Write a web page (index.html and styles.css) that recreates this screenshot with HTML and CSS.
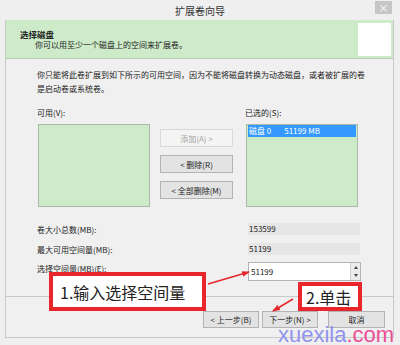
FILE: index.html
```html
<!DOCTYPE html>
<html lang="zh-CN">
<head>
  <meta charset="UTF-8" />
  <title>扩展卷向导</title>
  <link rel="stylesheet" href="styles.css">
</head>
<body>
  <div class="frame">
    <div class="titlebar">
      <span></span>
      <span class="title">扩展卷向导</span>
      <span class="close">×</span>
    </div>

    <div class="client">
      <div class="header">
        <div class="header-text">
          <div class="header-title">选择磁盘</div>
          <div class="header-sub">你可以用至少一个磁盘上的空间来扩展卷。</div>
        </div>
        <div class="header-icon"></div>
      </div>

      <div class="content">
        <p class="intro">你只能将此卷扩展到如下所示的可用空间，因为不能将磁盘转换为动态磁盘，或者被扩展的卷<br>是启动卷或系统卷。</p>

        <div class="pick">
          <div class="col">
            <div class="lbl">可用(V):</div>
            <div class="listbox"></div>
          </div>
          <div class="mid">
            <button class="btn" disabled>添加(A) &gt;</button>
            <button class="btn">&lt; 删除(R)</button>
            <button class="btn">&lt; 全部删除(M)</button>
          </div>
          <div class="col">
            <div class="lbl">已选的(S):</div>
            <div class="listbox">
              <div class="item selected"><span>磁盘 0</span><span>51199 MB</span></div>
            </div>
          </div>
        </div>

        <div class="fields">
          <div class="row">
            <span class="row-lbl">卷大小总数(MB):</span>
            <span class="ro">153599</span>
          </div>
          <div class="row">
            <span class="row-lbl">最大可用空间量(MB):</span>
            <span class="ro">51199</span>
          </div>
          <div class="row row-top">
            <span class="row-lbl">选择空间量(MB)(E):</span>
            <div class="spin">
              <input type="text" value="51199">
              <div class="spin-btns">
                <span class="up"></span>
                <span class="down"></span>
              </div>
            </div>
          </div>
        </div>
      </div>

      <div class="footer">
        <button class="btn">&lt; 上一步(B)</button>
        <button class="btn">下一步(N) &gt;</button>
        <button class="btn cancel">取消</button>
      </div>
    </div>

    <!-- annotations drawn over the screenshot -->
    <div class="note note1">1.输入选择空间量</div>
    <div class="note note2">2.单击</div>
    <svg class="arrows" width="400" height="345" viewBox="0 0 400 345">
      <defs>
        <marker id="head" markerWidth="8" markerHeight="6" refX="7" refY="3" orient="auto" markerUnits="userSpaceOnUse">
          <path d="M0 0 L8 3 L0 6 Z" fill="#e8262b"/>
        </marker>
      </defs>
      <line x1="208" y1="284" x2="249" y2="272" stroke="#e8262b" stroke-width="1.5" marker-end="url(#head)"/>
      <line x1="293" y1="299" x2="273" y2="311" stroke="#e8262b" stroke-width="1.5" marker-end="url(#head)"/>
    </svg>
    <div class="watermark"><span class="wm-a">xuexila</span><span class="wm-b">.com</span></div>
  </div>
</body>
</html>
```

FILE: styles.css
```css
* {
  box-sizing: border-box;
}

body {
  margin: 0;
  background: #efefef;
  font-family: "Noto Sans CJK SC", "Liberation Sans", sans-serif;
  color: #222;
}

.frame {
  position: relative;
  width: 400px;
  height: 345px;
  background: #efefef;
  overflow: hidden;
}

.titlebar {
  height: 20px;
  display: grid;
  grid-template-columns: 1fr auto 1fr;
  align-items: center;
}

.title {
  font-size: 10px;
  color: #333;
}

.close {
  justify-self: end;
  margin-right: 8px;
  width: 17px;
  height: 13px;
  background: #c6c6c6;
  color: #fff;
  font-size: 10px;
  line-height: 13px;
  text-align: center;
  align-self: start;
  margin-top: 1px;
}

.client {
  margin: 0 6px 0 5px;
  height: 318px;
  background: #f0f0f0;
  border: 1px solid #c9c9c9;
  border-top: none;
  display: flex;
  flex-direction: column;
}

.header {
  height: 39px;
  background: #cdebc9;
  border-bottom: 1px solid #b5c9b3;
  display: flex;
  justify-content: space-between;
  align-items: center;
  padding: 0 2px 0 14px;
}

.header-text {
  padding-top: 1px;
}

.header-title {
  font-size: 8.5px;
  font-weight: bold;
  line-height: 10px;
}

.header-sub {
  font-size: 8px;
  line-height: 11px;
  padding-left: 15px;
}

.header-icon {
  width: 33px;
  height: 33px;
  background: #fff;
}

.content {
  padding-left: 31px;
  flex: 1;
}

.intro {
  margin: 9px 0 0;
  font-size: 8px;
  line-height: 14px;
}

.pick {
  display: flex;
  margin-top: 11px;
}

.col {
  width: 113px;
}

.lbl {
  font-size: 8px;
  line-height: 12px;
  margin-bottom: 5px;
}

.listbox {
  height: 83px;
  margin-left: 1px;
  background: #cdebc9;
  border: 1px solid #a9b8a8;
}

.mid {
  width: 73px;
  margin: 22px 12px 0 10px;
  display: flex;
  flex-direction: column;
  gap: 8px;
}

.btn {
  height: 18px;
  padding: 0;
  font-family: inherit;
  font-size: 8px;
  color: #222;
  background: #e3e3e3;
  border: 1px solid #b3b3b3;
}

.btn:disabled {
  background: #f4f4f4;
  border-color: #d9d9d9;
  color: #a0a0a0;
}

.item {
  height: 12px;
  margin: 0 1px;
  display: flex;
  gap: 13px;
  font-size: 8px;
  line-height: 12px;
  padding-left: 1px;
}

.selected {
  background: #3399ff;
  color: #fff;
}

.fields {
  margin-top: 16px;
  display: flex;
  flex-direction: column;
  gap: 8px;
}

.row {
  display: flex;
  align-items: center;
}

.row-top {
  align-items: flex-start;
  margin-top: -1px;
}

.row-lbl {
  width: 211px;
  font-size: 8px;
}

.row-top .row-lbl {
  line-height: 14px;
}

.ro {
  width: 112px;
  height: 12px;
  background: #e6e6e6;
  font-size: 8px;
  line-height: 12px;
  padding-left: 1px;
}

.spin {
  width: 113px;
  height: 19px;
  display: flex;
  background: #fff;
  border: 1px solid #b3b3b3;
}

.spin input {
  flex: 1;
  min-width: 0;
  border: none;
  outline: none;
  padding: 0 0 0 2px;
  font-family: inherit;
  font-size: 8px;
  color: #222;
  background: transparent;
}

.spin-btns {
  width: 10px;
  display: flex;
  flex-direction: column;
  border-left: 1px solid #d0d0d0;
  background: #ececec;
}

.spin-btns span {
  flex: 1;
  display: flex;
  align-items: center;
  justify-content: center;
}

.up::before {
  content: "";
  border: 2px solid transparent;
  border-bottom: 3px solid #444;
  border-top: none;
}

.down::before {
  content: "";
  border: 2px solid transparent;
  border-top: 3px solid #444;
  border-bottom: none;
}

.footer {
  height: 41px;
  border-top: 1px solid #c9c9c9;
  display: flex;
  justify-content: flex-end;
  align-items: flex-start;
  padding: 14px 8px 0 0;
  gap: 3px;
}

.footer .btn {
  width: 56px;
  height: 17px;
}

.footer .cancel {
  width: 57px;
  margin-left: 7px;
}

.note {
  position: absolute;
  background: #fff;
  border: 4px solid #e8262b;
  font-size: 16px;
  color: #222;
  display: flex;
  align-items: center;
  white-space: nowrap;
}

.note1 {
  left: 49px;
  top: 272px;
  width: 157px;
  height: 39px;
  padding-left: 7px;
}

.note2 {
  left: 298px;
  top: 282px;
  width: 64px;
  height: 29px;
  padding-left: 4px;
}

.arrows {
  position: absolute;
  left: 0;
  top: 0;
  pointer-events: none;
}

.watermark {
  position: absolute;
  left: 278px;
  top: 325px;
  font-family: "Liberation Sans", sans-serif;
  font-size: 22px;
  line-height: 20px;
}

.wm-a {
  color: #8f93ec;
}

.wm-b {
  color: #ec4f97;
}
```
